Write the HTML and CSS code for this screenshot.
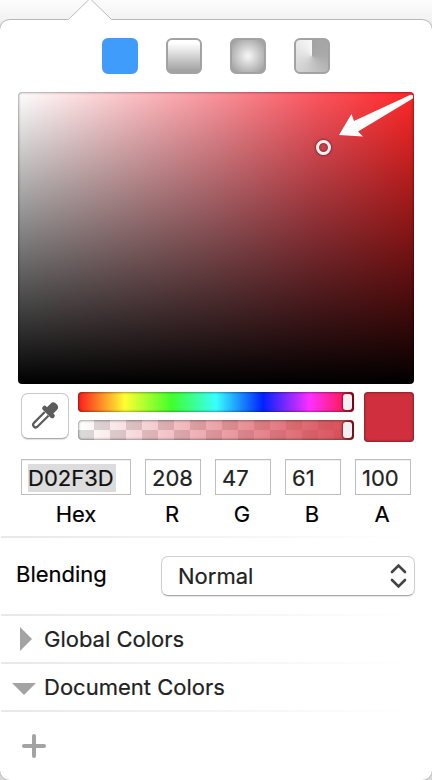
FILE: index.html
```html
<!DOCTYPE html>
<html lang="en">
<head>
<meta charset="utf-8">
<title>Color picker</title>
<link rel="stylesheet" href="styles.css">
</head>
<body>
<main class="popover">
  <svg class="pointer" width="44" height="22" viewBox="0 0 44 22"><path d="M0 21 2 19.5 20.5 1Q22-.5 23.5 1L42 19.5 44 21V22H0Z" fill="#fff"/><path d="M1 20 20.5 1Q22-.5 23.5 1L43 20" fill="none" stroke="#bdbdbd"/></svg>
  <nav class="modes">
    <span class="mode solid"></span>
    <span class="mode linear"></span>
    <span class="mode radial"></span>
    <span class="mode angular"></span>
  </nav>
  <section class="field">
    <svg class="arrow" width="78" height="46" viewBox="0 0 78 46"><path d="M1 43 13.5 22 16 29 72 3Q75 2 75 4.500Q75.500 6 74 7L20 39.500 25 44.500Z" fill="#fff"/></svg>
    <span class="cursor"></span>
  </section>
  <section class="controls">
    <button class="dropper" aria-label="Pick color">
      <svg width="28" height="28" viewBox="0 0 28 28"><g transform="translate(13.500 14) rotate(45)"><path d="M-2.600-3V12Q-2.600 15 0 15T2.600 12V-3" fill="#fff" stroke="#5c5c5c" stroke-width="2.200"/><path d="M-4.500-14Q-4.300-18 0-18T4.500-14V-9H5.500Q7.800-9 7.800-6.700T5.500-4.200H-5.500Q-7.800-4.200-7.800-6.700T-5.500-9H-4.500Z" fill="#5c5c5c" transform="translate(0 1)"/></g></svg>
    </button>
    <div class="sliders">
      <div class="slider hue"><i class="thumb"></i></div>
      <div class="slider alpha"><i class="thumb"></i></div>
    </div>
    <span class="swatch"></span>
  </section>
  <section class="values">
    <label class="value"><span class="box"><mark>D02F3D</mark></span><span class="name">Hex</span></label>
    <label class="value"><span class="box">208</span><span class="name channel">R</span></label>
    <label class="value"><span class="box">47</span><span class="name channel">G</span></label>
    <label class="value"><span class="box">61</span><span class="name channel">B</span></label>
    <label class="value"><span class="box">100</span><span class="name channel">A</span></label>
  </section>
  <section class="blending">
    <span class="blend-label">Blending</span>
    <div class="select"><span>Normal</span><svg width="18" height="26" viewBox="0 0 18 26"><path d="M3 9 9.500 2.500 16 9M3 17 9.500 23.500 16 17" fill="none" stroke="#444" stroke-width="2.600" stroke-linecap="round"/></svg></div>
  </section>
  <section class="group global"><svg width="24" height="24" viewBox="0 0 24 24"><path d="M8 0V24L20 12Z" fill="#a3a3a3"/></svg><span>Global Colors</span></section>
  <section class="group document"><svg width="24" height="24" viewBox="0 0 24 24"><path d="M0 8H24L12 20Z" fill="#a3a3a3"/></svg><span>Document Colors</span></section>
  <section class="add"><svg width="24" height="24" viewBox="0 0 24 24"><path d="M12 2V22M2 12H22" stroke="#a3a3a3" stroke-width="4" stroke-linecap="round"/></svg></section>
</main>
</body>
</html>
```

FILE: styles.css
```css
* { box-sizing: border-box; }
body {
  margin: 0;
  height: 780px;
  padding-top: 19px;
  overflow: hidden;
  background: linear-gradient(#fdfdfd, #f2f2f2 19px, #d8d8d8 30px);
  font: 22px/28px Inter, "Liberation Sans", sans-serif;
  color: #222;
  -webkit-text-stroke: .2px;
}
.popover {
  position: relative;
  height: 762px;
  margin: 0 -1px;
  padding: 0 1px;
  border: 1px solid #b8b8b8;
  border-radius: 11px;
  background: #fff;
  display: flex;
  flex-direction: column;
}
.pointer { position: absolute; left: 68px; top: -21px; }
svg { display: block; flex: none; }
.modes { display: flex; gap: 28px; margin: 18px 0 18px 101px; }
.mode { width: 36px; height: 36px; border: 2px solid #a3a3a3; border-radius: 6px; }
.solid { background: #409cfa; border-color: #409cfa; }
.linear { background: linear-gradient(#fff 10%, #a3a3a3 95%); }
.radial { background: radial-gradient(circle, #f8f8f8, #a3a3a3 20px); }
.angular { background: conic-gradient(#a3a3a3, #aaa 25%, #ccc 55%, #f8f8f8); }
.field {
  position: relative;
  flex: none;
  width: 396px;
  height: 292px;
  margin-left: 17px;
  border-radius: 4px;
  background: linear-gradient(transparent, #000), linear-gradient(90deg, #fff, #fb929a 50%, #fd5660 75%, #ff2626);
  box-shadow: inset 0 0 3px rgba(0, 0, 0, .65);
}
.arrow { position: absolute; left: 320px; top: 0; }
.cursor {
  position: absolute;
  left: 298px;
  top: 48px;
  width: 15px;
  height: 15px;
  border: 3px solid #f2f2f2;
  border-radius: 50%;
  box-shadow: 0 0 3px rgba(0, 0, 0, .7), inset 0 0 3px rgba(0, 0, 0, .5);
}
.controls { display: flex; margin: 8px 0 0 20px; height: 50px; }
.dropper {
  width: 48px;
  height: 46px;
  margin: 1px 9px 0 0;
  padding: 0;
  display: grid;
  place-items: center;
  border: 1px solid #c9c9c9;
  border-bottom-color: #aaa;
  border-radius: 7px;
  background: #fff;
  box-shadow: 0 1px 1px rgba(0, 0, 0, .12);
}
.sliders { display: grid; gap: 8px; width: 276px; align-content: start; }
.slider {
  height: 20px;
  padding: 2px;
  border-radius: 4px;
  display: flex;
  justify-content: flex-end;
  box-shadow: inset 0 0 3px rgba(0, 0, 0, .7);
}
.hue { background: linear-gradient(90deg, #fc1c1c, #ffff32 17%, #3fff2d 34%, #39ffff 50%, #0022ff 67%, #ff30ff 84%, #ff1744 98%, #a00018); }
.alpha {
  background: linear-gradient(90deg, rgba(208, 47, 61, 0), rgba(214, 65, 75, .92) 97%, #8b2029), repeating-conic-gradient(#dcdcdc 0 25%, #fff 0 50%) 0 0 / 32px 20px;
}
.thumb { width: 9px; height: 16px; border-radius: 3px; background: #f1f1f1; box-shadow: 0 0 2px 1px rgba(85, 0, 0, .6); }
.swatch { width: 50px; height: 50px; margin-left: 10px; border-radius: 4px; background: #d02f3d; box-shadow: inset 0 0 3px rgba(0, 0, 0, .65); }
.values { display: grid; grid-template-columns: 110px repeat(4, 56px); column-gap: 14px; margin: 17px 0 0 20px; }
.value { display: grid; grid-template-rows: 36px 38px; }
.box { border: 1px solid #bebebe; background: #fff; padding: 4px 6px; line-height: 28px; box-shadow: inset 0 1px #f0f0f0; }
mark { display: block; width: 88px; height: 28px; background: #dcdcdc; color: #111; }
.name { text-align: center; line-height: 38px; color: #000; }
.channel { padding-right: 2px; }
.blending, .group, .add {
  border-top: 2px solid;
  border-image: linear-gradient(90deg, #e8e8e8, #fff 95%) 1;
}
.blending { display: flex; height: 78px; padding: 18px 0 0 15px; margin-top: 3px; }
.blend-label { width: 145px; line-height: 36px; color: #000; }
.select {
  width: 254px;
  height: 40px;
  border: 1px solid #cfcfcf;
  border-bottom-color: #aaa;
  border-radius: 7px;
  padding: 0 7px 1px 16px;
  display: flex;
  align-items: center;
  justify-content: space-between;
  box-shadow: 0 1px 1px rgba(0, 0, 0, .1);
}
.group { height: 48px; display: flex; align-items: center; gap: 8px; padding-left: 11px; }
.add { padding: 22px 0 0 21px; }
```
